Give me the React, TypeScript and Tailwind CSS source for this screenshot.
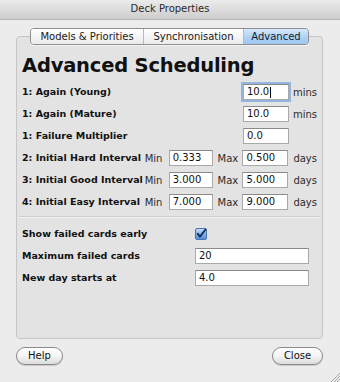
import * as React from 'react'

const font = { fontFamily: '"DejaVu Sans", "Liberation Sans", sans-serif' }

function Field({ value, w, focused }: { value: string; w: string; focused?: boolean }) {
  return (
    <div
      className={`${w} h-[16px] flex items-center bg-white pl-[3px] text-[10px] leading-[14px] text-[#111] border border-[#a9a9a9] border-t-[#8a8a8a] ${
        focused ? 'border-[#6f9bd6] shadow-[0_0_0_2px_rgba(120,165,225,0.75)]' : ''
      }`}
    >
      {value}
      {focused && <span className="ml-[1px] inline-block h-[11px] w-px bg-black" />}
    </div>
  )
}

function Check() {
  return (
    <svg width="12" height="12" viewBox="0 0 12 12">
      <defs>
        <linearGradient id="cb" x1="0" y1="0" x2="0" y2="1">
          <stop offset="0" stopColor="#cfe3fa" />
          <stop offset="0.5" stopColor="#7fb0ea" />
          <stop offset="1" stopColor="#4f8ed9" />
        </linearGradient>
      </defs>
      <rect x="0.5" y="0.5" width="11" height="11" rx="1.5" fill="url(#cb)" stroke="#4a76b3" />
      <path d="M2.8 5.8 L5 8.6 L10.5 1.5" fill="none" stroke="#1c2c55" strokeWidth="1.9" strokeLinecap="round" strokeLinejoin="round" />
    </svg>
  )
}

function Row({ children }: { children: React.ReactNode }) {
  return <div className="flex h-[22px] items-center">{children}</div>
}

const label = 'text-[9.5px] font-bold text-[#111]'
const unit = 'text-[10px] text-[#2b2b2b]'

export default function App() {
  const tabs = [
    { name: 'Models & Priorities', w: 'w-[112px]' },
    { name: 'Synchronisation', w: 'w-[100px]' },
    { name: 'Advanced', w: 'w-[65px]', active: true },
  ]

  return (
    <div className="relative h-[382px] w-[340px] overflow-hidden bg-[#ececec]" style={font}>
      {/* title bar */}
      <div className="flex h-[20px] items-center justify-center border-b border-[#b4b4b4] bg-gradient-to-b from-[#ebebeb] to-[#cdcdcd] pb-[3px] text-[10px] text-[#2a2a2a]">
        Deck Properties
      </div>

      {/* tab box */}
      <div className="ml-[16px] mt-[16px] h-[303px] w-[307px] rounded-[4px] border border-[#c6c6c6] bg-[#e3e3e3]">
        <div className="-mt-[9px] flex justify-center">
          <div className="flex h-[17px] overflow-hidden rounded-[4px] border border-[#8e8e8e] shadow-[0_1px_0_rgba(255,255,255,0.6)]">
            {tabs.map((t, i) => (
              <div
                key={t.name}
                className={`${t.w} flex items-center justify-center text-[10px] ${
                  i > 0 ? 'border-l border-[#b9b9b9]' : ''
                } ${
                  t.active
                    ? 'bg-gradient-to-b from-[#d6e8fb] via-[#b3d3f4] to-[#9cc6f1] text-[#0f1d33]'
                    : 'bg-gradient-to-b from-white to-[#ebebeb] text-[#1a1a1a]'
                }`}
              >
                {t.name}
              </div>
            ))}
          </div>
        </div>

        <div className="pl-[5px] pr-[5px]">
          <div className="mt-[9px] h-[24px] text-[19.5px] font-bold leading-[24px] tracking-[-0.2px] text-[#111]">
            Advanced Scheduling
          </div>

          <div className="mt-[3px]">
            <Row>
              <span className={`${label} w-[221px]`}>1: Again (Young)</span>
              <Field value="10.0" w="w-[46px]" focused />
              <span className={`${unit} ml-[4px]`}>mins</span>
            </Row>
            <Row>
              <span className={`${label} w-[221px]`}>1: Again (Mature)</span>
              <Field value="10.0" w="w-[46px]" />
              <span className={`${unit} ml-[4px]`}>mins</span>
            </Row>
            <Row>
              <span className={`${label} w-[221px]`}>1: Failure Multiplier</span>
              <Field value="0.0" w="w-[46px]" />
            </Row>
            {[
              ['2: Initial Hard Interval', '0.333', '0.500'],
              ['3: Initial Good Interval', '3.000', '5.000'],
              ['4: Initial Easy Interval', '7.000', '9.000'],
            ].map(([l, min, max]) => (
              <Row key={l}>
                <span className={`${label} w-[123px]`}>{l}</span>
                <span className={`${unit} w-[24px]`}>Min</span>
                <Field value={min} w="w-[44px]" />
                <span className={`${unit} w-[30px] pl-[5px]`}>Max</span>
                <Field value={max} w="w-[46px]" />
                <span className={`${unit} ml-[5px]`}>days</span>
              </Row>
            ))}
          </div>

          <div className="-mx-[3px] mb-[5px] mt-[3px] border-t border-[#cdcdcd] border-b border-b-[#f3f3f3]" />

          <Row>
            <span className={`${label} w-[173px]`}>Show failed cards early</span>
            <Check />
          </Row>
          <Row>
            <span className={`${label} w-[173px]`}>Maximum failed cards</span>
            <Field value="20" w="w-[114px]" />
          </Row>
          <Row>
            <span className={`${label} w-[173px]`}>New day starts at</span>
            <Field value="4.0" w="w-[114px]" />
          </Row>
        </div>
      </div>

      {/* buttons */}
      <div className="ml-[16px] mt-[8px] flex w-[307px] justify-between">
        <button className="h-[18px] w-[47px] rounded-full border border-[#8a8a8a] bg-gradient-to-b from-white via-[#f4f4f4] to-[#dcdcdc] text-[10px] leading-none text-[#111] shadow-[0_1px_1px_rgba(0,0,0,0.15)]">
          Help
        </button>
        <button className="h-[18px] w-[51px] rounded-full border border-[#8a8a8a] bg-gradient-to-b from-white via-[#f4f4f4] to-[#dcdcdc] text-[10px] leading-none text-[#111] shadow-[0_1px_1px_rgba(0,0,0,0.15)]">
          Close
        </button>
      </div>

      {/* resize grip */}
      <svg className="absolute bottom-0 right-0" width="12" height="12" viewBox="0 0 12 12">
        <path d="M3 12 L12 3 M6 12 L12 6 M9 12 L12 9" stroke="#a8a8a8" strokeWidth="1" />
      </svg>
    </div>
  )
}
